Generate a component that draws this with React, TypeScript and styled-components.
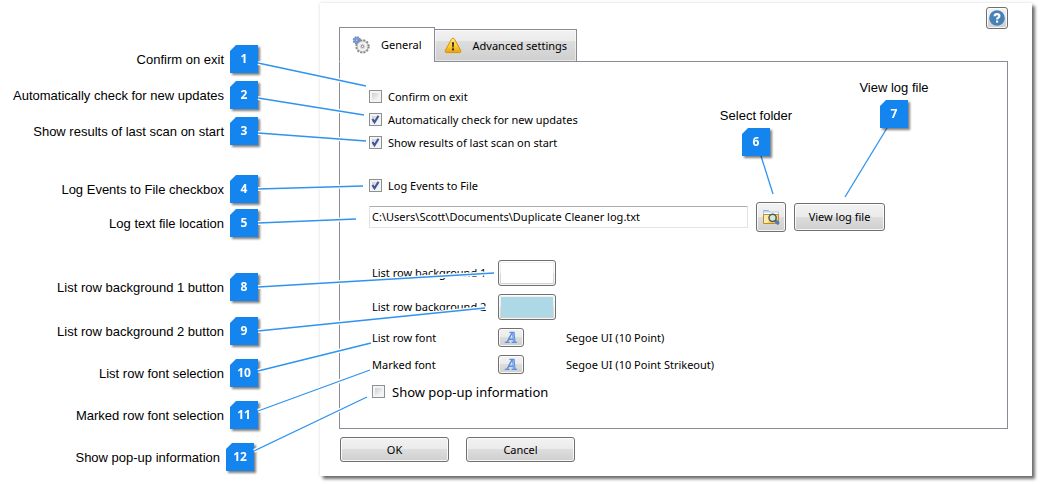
import React, { useState } from "react";
import styled, { createGlobalStyle } from "styled-components";

const GlobalStyle = createGlobalStyle`
  *, *::before, *::after { box-sizing: border-box; }
  body {
    margin: 0;
    background: #fff;
    color: #000;
    font-family: "Noto Sans", "Open Sans", sans-serif;
    font-size: 11px;
    line-height: 16px;
  }
`;

const Page = styled.main`
  position: relative;
  display: flex;
  align-items: flex-start;
  padding: 3px 8px 8px 0;
`;

/* ---------- callouts ---------- */

const CalloutColumn = styled.aside`
  flex: 0 0 320px;
  display: flex;
  flex-direction: column;
  padding: 42px 62px 0 0;
`;

const CalloutGroup = styled.div<{ $gap: number; $before?: number; $indent?: number }>`
  display: flex;
  flex-direction: column;
  gap: ${(p) => p.$gap}px;
  margin-top: ${(p) => p.$before ?? 0}px;
  padding-right: ${(p) => p.$indent ?? 0}px;
`;

const CalloutRow = styled.div`
  display: flex;
  align-items: center;
  justify-content: flex-end;
  gap: 6px;
`;

const CalloutText = styled.span`
  padding-top: 1px;
  font-family: "Liberation Sans", Arial, sans-serif;
  font-size: 13px;
  line-height: 16px;
  white-space: nowrap;
`;

const BadgeShadow = styled.span`
  flex: none;
  filter: drop-shadow(2px 2px 1px rgba(0, 0, 0, 0.5));
`;

const BadgeFace = styled.span`
  display: flex;
  align-items: center;
  justify-content: center;
  width: 28px;
  height: 28px;
  background: #1485ee;
  clip-path: polygon(6px 0, 100% 0, 100% 100%, 0 100%, 0 6px);
  color: #fff;
  font-size: 12px;
  font-weight: bold;
`;

const FloatingCallout = styled.div<{ $x: number; $y: number }>`
  position: absolute;
  left: ${(p) => p.$x}px;
  top: ${(p) => p.$y}px;
  z-index: 2;
  width: 80px;
  display: flex;
  flex-direction: column;
  align-items: center;
  gap: 4px;
`;

const Leaders = styled.svg`
  position: absolute;
  inset: 0;
  width: 100%;
  height: 100%;
  pointer-events: none;
`;

/* ---------- dialog ---------- */

const Dialog = styled.section`
  flex: 1;
  min-width: 0;
  padding: 4px 24px 14px 19px;
  background: #fff;
  box-shadow: 3px 3px 3px rgba(0, 0, 0, 0.55), 0 0 3px rgba(0, 0, 0, 0.15);
`;

const Header = styled.header`
  display: flex;
  justify-content: space-between;
  align-items: flex-start;
  height: 54px;
`;

const Tabs = styled.div`
  display: flex;
  align-items: flex-end;
  align-self: flex-end;
`;

const Tab = styled.button<{ $active?: boolean }>`
  position: relative;
  display: flex;
  align-items: center;
  gap: 11px;
  height: ${(p) => (p.$active ? 35 : 33)}px;
  margin: 0 0 -1px ${(p) => (p.$active ? 0 : -1)}px;
  padding: ${(p) => (p.$active ? "0 12px" : "0 9px")};
  border: 1px solid #898c95;
  border-bottom-color: ${(p) => (p.$active ? "#fff" : "#898c95")};
  background: ${(p) =>
    p.$active ? "#fff" : "linear-gradient(#f2f2f2, #ebebeb 36%, #dddddd 37%, #cfcfcf)"};
  box-shadow: ${(p) => (p.$active ? "none" : "inset 0 0 0 1px rgba(255, 255, 255, 0.5)")};
  color: #000;
  font: inherit;
  white-space: nowrap;
`;

const Panel = styled.div`
  padding: 23px 29px 27px;
  border: 1px solid #898c95;
`;

const Push = styled.button<{ $w: number; $h: number }>`
  flex: none;
  display: flex;
  align-items: center;
  justify-content: center;
  width: ${(p) => p.$w}px;
  height: ${(p) => p.$h}px;
  padding: 0;
  border: 1px solid #707070;
  border-radius: 3px;
  background: linear-gradient(#f2f2f2, #ebebeb 49%, #dddddd 50%, #cfcfcf);
  box-shadow: inset 0 0 0 1px rgba(255, 255, 255, 0.8);
  color: #000;
  font: inherit;
`;

const Swatch = styled(Push)<{ $color: string }>`
  padding: 2px;
  &::before {
    content: "";
    flex: 1;
    align-self: stretch;
    background: ${(p) => p.$color};
  }
`;

const CheckRow = styled.label<{ $large?: boolean }>`
  display: flex;
  align-items: center;
  gap: ${(p) => (p.$large ? 7 : 6)}px;
  height: ${(p) => (p.$large ? 19 : 23)}px;
  font-size: ${(p) => (p.$large ? 13 : 11)}px;
`;

const CheckStack = styled.span`
  display: grid;
  width: 13px;
  height: 13px;
  & > * { grid-area: 1 / 1; }
`;

const CheckInput = styled.input`
  appearance: none;
  width: 13px;
  height: 13px;
  margin: 0;
  border: 1px solid #8e8f8f;
  background: linear-gradient(135deg, #cdd1d8 20%, #f8f8f9 80%) padding-box;
  box-shadow: inset 0 0 0 2px #f4f4f4;
  & + svg { visibility: hidden; pointer-events: none; z-index: 0; }
  &:checked + svg { visibility: visible; }
`;

const LogBlock = styled.div`
  display: flex;
  flex-direction: column;
  gap: 5px;
  margin-top: 20px;
`;

const FileRow = styled.div`
  display: flex;
  align-items: center;
  gap: 8px;
`;

const PathInput = styled.input`
  flex: 0 1 379px;
  min-width: 0;
  height: 22px;
  padding: 0 2px 2px;
  border: 1px solid #e2e3ea;
  border-top-color: #abadb3;
  border-radius: 1px;
  color: #000;
  font: inherit;
`;

const ListOptions = styled.div`
  display: grid;
  grid-template-columns: 126px 68px 1fr;
  grid-template-rows: 26px 26px 19px 19px 19px;
  align-items: center;
  row-gap: 8px;
  margin: 28px 0 0 3px;
`;

const FullRow = styled.div`
  grid-column: 1 / -1;
`;

const Footer = styled.footer`
  display: flex;
  gap: 17px;
  margin: 8px 0 0 1px;
`;

/* ---------- icons ---------- */

const GearsIcon = () => (
  <svg width="18" height="18" viewBox="0 0 18 18" aria-hidden="true">
    <circle cx="4.8" cy="4.2" r="3.3" fill="#86a3de" stroke="#6686c8" strokeWidth="1.6" strokeDasharray="1.6 1" />
    <circle cx="4.8" cy="4.2" r="1.1" fill="#dfe8fa" stroke="#4c6cb0" strokeWidth=".6" />
    <circle cx="10.5" cy="10.4" r="6.2" fill="none" stroke="#8a8a8a" strokeWidth="2" strokeDasharray="2.05 1.2" />
    <circle cx="10.5" cy="10.4" r="5.5" fill="#ececec" stroke="#8f8f8f" strokeWidth=".7" />
    <circle cx="10.5" cy="10.4" r="3.6" fill="#e0e0e0" stroke="#fafafa" strokeWidth="1" />
    <circle cx="10.5" cy="10.4" r="1.2" fill="#fff" stroke="#777" strokeWidth=".9" />
  </svg>
);

const WarningIcon = () => (
  <svg width="18" height="17" viewBox="0 0 18 17" aria-hidden="true">
    <defs>
      <linearGradient id="warn" x1="0" y1="0" x2="0" y2="1">
        <stop offset="0" stopColor="#ffe98a" />
        <stop offset=".6" stopColor="#fcc92c" />
        <stop offset="1" stopColor="#eaa010" />
      </linearGradient>
    </defs>
    <path d="M9 1.2 Q10 1.2 10.6 2.3 L16.7 13.4 Q17.4 15.6 15.6 15.6 H2.4 Q.6 15.6 1.3 13.4 L7.4 2.3 Q8 1.2 9 1.2Z" fill="url(#warn)" stroke="#cf930f" />
    <path d="M7.9 5.2h2.2l-.5 5.2H8.4z" fill="#2e2a20" />
    <rect x="8" y="11.4" width="2" height="2" fill="#2e2a20" />
  </svg>
);

const FolderSearchIcon = () => (
  <svg width="18" height="18" viewBox="0 0 18 18" aria-hidden="true">
    <path d="M1.5 4V2.5h5L8 4" fill="#d9eafa" stroke="#8fb3d6" />
    <path d="M1 3.5h16V7H1z" fill="#a9cbe8" />
    <path d="M2 4.5h14V6H2z" fill="#fff" />
    <path d="M1.5 6.5h15v9h-15z" fill="#f8d470" stroke="#c08a28" />
    <path d="M2 7h9l-6 8H2z" fill="#fdebae" />
    <path d="M13.4 12.6l2.4 2.4" stroke="#5577c0" strokeWidth="3.2" strokeLinecap="round" />
    <circle cx="10.6" cy="9.8" r="3.6" fill="#d6ead0" stroke="#4f5c58" strokeWidth="1.5" />
  </svg>
);

const HelpIcon = () => (
  <svg width="16" height="16" viewBox="0 0 16 16" aria-hidden="true">
    <circle cx="8" cy="8" r="7.8" fill="#4682b8" />
    <path d="M5.6 6.2 Q5.7 4.2 8 4.2 Q10.4 4.2 10.4 6 Q10.4 7.1 9.2 7.7 Q8.1 8.3 8.1 9.4" fill="none" stroke="#fff" strokeWidth="2.2" />
    <rect x="7" y="10.6" width="2.2" height="2" fill="#fff" />
  </svg>
);

const FontIcon = () => (
  <svg width="14" height="13" viewBox="0 0 14 13" aria-hidden="true">
    <path d="M3 11.3L8 1.8" stroke="#5a8ee0" strokeWidth="1.5" />
    <path d="M9.3 1.4L10.3 11.3" stroke="#5a8ee0" strokeWidth="2.6" />
    <path d="M5.4 1.4H10.4M.8 11.4H5.6M7.6 11.4H13M4.6 8.2H9.6" stroke="#5a8ee0" strokeWidth="1.4" />
    <path d="M9.2 2L10 10.8" stroke="#8db6f2" strokeWidth="1" />
  </svg>
);

const CheckMark = () => (
  <svg width="13" height="13" viewBox="0 0 13 13" aria-hidden="true">
    <path d="M3.4 6 L5.5 9.2 L9.5 2.8" fill="none" stroke="#41559c" strokeWidth="2.1" />
  </svg>
);

/* ---------- parts ---------- */

const Badge = ({ n }: { n: number }) => (
  <BadgeShadow>
    <BadgeFace>{n}</BadgeFace>
  </BadgeShadow>
);

const Callout = ({ n, text }: { n: number; text: string }) => (
  <CalloutRow>
    <CalloutText>{text}</CalloutText>
    <Badge n={n} />
  </CalloutRow>
);

const Check = ({ text, initial, large }: { text: string; initial?: boolean; large?: boolean }) => {
  const [on, setOn] = useState(!!initial);
  return (
    <CheckRow $large={large}>
      <CheckStack>
        <CheckInput type="checkbox" checked={on} onChange={(e) => setOn(e.target.checked)} />
        <CheckMark />
      </CheckStack>
      {text}
    </CheckRow>
  );
};

const leaderLines = [
  [258, 63, 366, 86],
  [258, 98, 364, 115],
  [258, 133, 366, 141],
  [258, 189, 363, 186],
  [258, 223, 356, 219],
  [761, 156, 773, 194],
  [887, 128, 845, 197],
  [258, 287, 494, 273],
  [258, 331, 485, 308],
  [258, 371, 371, 343],
  [258, 411, 370, 370],
  [254, 451, 367, 397],
];

export default function App() {
  const [path, setPath] = useState("C:\\Users\\Scott\\Documents\\Duplicate Cleaner log.txt");
  return (
    <>
      <GlobalStyle />
      <Page>
        <CalloutColumn>
          <CalloutGroup $gap={8}>
            <Callout n={1} text="Confirm on exit" />
            <Callout n={2} text="Automatically check for new updates" />
            <Callout n={3} text="Show results of last scan on start" />
          </CalloutGroup>
          <CalloutGroup $gap={6} $before={30}>
            <Callout n={4} text="Log Events to File checkbox" />
            <Callout n={5} text="Log text file location" />
          </CalloutGroup>
          <CalloutGroup $gap={16} $before={36}>
            <Callout n={8} text="List row background 1 button" />
            <Callout n={9} text="List row background 2 button" />
          </CalloutGroup>
          <CalloutGroup $gap={14} $before={14}>
            <Callout n={10} text="List row font selection" />
            <Callout n={11} text="Marked row font selection" />
          </CalloutGroup>
          <CalloutGroup $gap={14} $before={14} $indent={4}>
            <Callout n={12} text="Show pop-up information" />
          </CalloutGroup>
        </CalloutColumn>

        <Dialog>
          <Header>
            <Tabs role="tablist">
              <Tab type="button" role="tab" aria-selected="true" $active>
                <GearsIcon />
                General
              </Tab>
              <Tab type="button" role="tab" aria-selected="false">
                <WarningIcon />
                Advanced settings
              </Tab>
            </Tabs>
            <Push type="button" aria-label="Help" $w={22} $h={22}>
              <HelpIcon />
            </Push>
          </Header>

          <Panel role="tabpanel">
            <Check text="Confirm on exit" />
            <Check text="Automatically check for new updates" initial />
            <Check text="Show results of last scan on start" initial />

            <LogBlock>
              <Check text="Log Events to File" initial />
              <FileRow>
                <PathInput
                  type="text"
                  aria-label="Log text file location"
                  value={path}
                  onChange={(e) => setPath(e.target.value)}
                />
                <Push type="button" aria-label="Select folder" $w={30} $h={30}>
                  <FolderSearchIcon />
                </Push>
                <Push type="button" $w={91} $h={28}>
                  View log file
                </Push>
              </FileRow>
            </LogBlock>

            <ListOptions>
              <label htmlFor="row-bg-1">List row background 1</label>
              <Swatch id="row-bg-1" type="button" $w={58} $h={26} $color="#ffffff" />
              <span />
              <label htmlFor="row-bg-2">List row background 2</label>
              <Swatch id="row-bg-2" type="button" $w={58} $h={26} $color="#add8e6" />
              <span />
              <label htmlFor="row-font">List row font</label>
              <Push id="row-font" type="button" $w={26} $h={19}>
                <FontIcon />
              </Push>
              <span>Segoe UI (10 Point)</span>
              <label htmlFor="marked-font">Marked font</label>
              <Push id="marked-font" type="button" $w={26} $h={19}>
                <FontIcon />
              </Push>
              <span>Segoe UI (10 Point Strikeout)</span>
              <FullRow>
                <Check text="Show pop-up information" large />
              </FullRow>
            </ListOptions>
          </Panel>

          <Footer>
            <Push type="button" $w={109} $h={25}>
              OK
            </Push>
            <Push type="button" $w={109} $h={25}>
              Cancel
            </Push>
          </Footer>
        </Dialog>

        <Leaders aria-hidden="true">
          {leaderLines.map(([x1, y1, x2, y2]) => (
            <g key={`${x1}-${y1}`}>
              <line x1={x1} y1={y1} x2={x2} y2={y2} stroke="#fff" strokeWidth="4" />
              <line x1={x1} y1={y1} x2={x2} y2={y2} stroke="#2f93f0" strokeWidth="1.3" />
            </g>
          ))}
        </Leaders>

        <FloatingCallout $x={716} $y={107}>
          <CalloutText>Select folder</CalloutText>
          <Badge n={6} />
        </FloatingCallout>
        <FloatingCallout $x={854} $y={79}>
          <CalloutText>View log file</CalloutText>
          <Badge n={7} />
        </FloatingCallout>
      </Page>
    </>
  );
}
